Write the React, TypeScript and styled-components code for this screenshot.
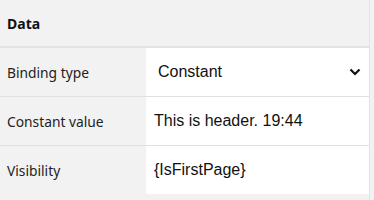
import styled, { createGlobalStyle } from 'styled-components';

const GlobalStyle = createGlobalStyle`
  html, body {
    margin: 0;
    padding: 0;
    background: #f2f2f2;
  }
`;

const rows = [
  { label: 'Binding type', value: 'Constant', select: true },
  { label: 'Constant value', value: 'This is header. 19:44' },
  { label: 'Visibility', value: '{IsFirstPage}' },
];

export default function App() {
  return (
    <>
      <GlobalStyle />
      <Panel>
        <Header>Data</Header>
        {rows.map((row, i) => (
          <Row key={row.label} $last={i === rows.length - 1}>
            <Label>{row.label}</Label>
            <Value $select={!!row.select}>
              <span>{row.value}</span>
              {row.select && (
                <svg width="12" height="8" viewBox="0 0 12 8">
                  <path
                    d="M1.5 1.5 L6 6 L10.5 1.5"
                    fill="none"
                    stroke="#111"
                    strokeWidth="2.2"
                  />
                </svg>
              )}
            </Value>
          </Row>
        ))}
      </Panel>
    </>
  );
}

const Panel = styled.div`
  width: 369px;
  height: 200px;
  border-right: 1px solid #e2e2e2;
  background: #f2f2f2;
  box-sizing: content-box;
`;

const Header = styled.div`
  height: 46px;
  display: flex;
  align-items: center;
  padding-left: 7px;
  font-family: 'Noto Sans', sans-serif;
  font-weight: 700;
  font-size: 14px;
  color: #111;
  border-bottom: 2px solid #e3e3e3;
`;

const Row = styled.div<{ $last: boolean }>`
  display: grid;
  grid-template-columns: 146px 1fr;
  height: 48px;
  border-bottom: ${(p) => (p.$last ? 'none' : '1px solid #e0e0e0')};
`;

const Label = styled.div`
  display: flex;
  align-items: center;
  padding-left: 7px;
  font-family: 'Noto Sans', sans-serif;
  font-size: 13.8px;
  color: #222;
`;

const Value = styled.div<{ $select: boolean }>`
  background: #fff;
  display: flex;
  align-items: center;
  justify-content: space-between;
  padding: 0 8px 0 ${(p) => (p.$select ? '12px' : '8px')};
  font-family: 'Liberation Sans', Arial, sans-serif;
  font-size: 16px;
  color: #111;
`;
